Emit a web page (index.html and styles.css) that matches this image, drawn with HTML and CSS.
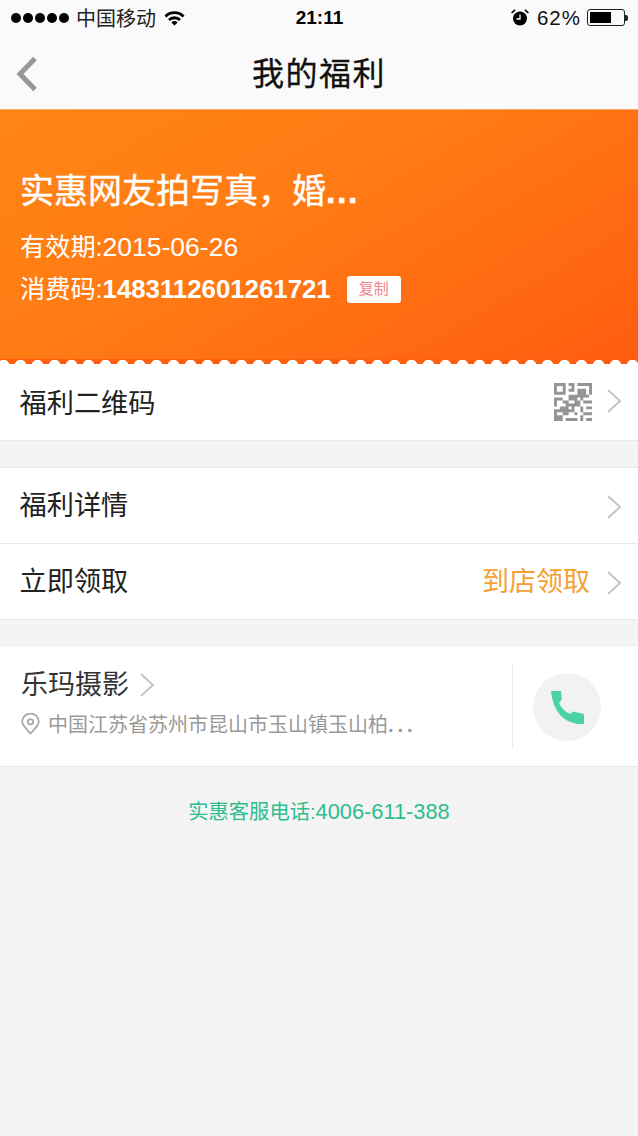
FILE: index.html
```html
<!DOCTYPE html>
<html lang="zh">

<head>
    <meta charset="UTF-8">
    <title>我的福利</title>
    <link rel="stylesheet" href="styles.css">
</head>

<body>
    <div class="status-bar">
        <div class="status-left">
            <span class="signal"><i></i><i></i><i></i><i></i><i></i></span>
            <span class="carrier">中国移动</span>
            <svg class="wifi" width="21" height="16" viewBox="0 0 21 16">
                <path d="M0.5 5.5 A14 14 0 0 1 20.5 5.5 L18.6 7.5 A11.4 11.4 0 0 0 2.4 7.5 Z" />
                <path d="M4 9 A9.2 9.2 0 0 1 17 9 L15.1 11 A6.6 6.6 0 0 0 5.9 11 Z" />
                <path d="M7.4 12.4 A4.4 4.4 0 0 1 13.6 12.4 L10.5 15.6 Z" />
            </svg>
        </div>
        <div class="status-time">21:11</div>
        <div class="status-right">
            <svg class="alarm" width="18" height="17" viewBox="0 0 18 17">
                <circle cx="9" cy="9.5" r="7" />
                <path d="M0.6 4 L4 0.8 M14 0.8 L17.4 4" stroke="#000" stroke-width="1.6" />
                <path d="M9 5.5 V10 H5.5" stroke="#fff" stroke-width="1.3" fill="none" />
            </svg>
            <span class="battery-text">62%</span>
            <span class="battery"><span class="battery-fill"></span></span>
            <span class="battery-cap"></span>
        </div>
    </div>

    <div class="nav">
        <svg class="back" width="22" height="36" viewBox="0 0 22 36">
            <path d="M19 2.5 L4 18 L19 33.5" />
        </svg>
        <h1>我的福利</h1>
    </div>

    <div class="ticket">
        <div class="ticket-title">实惠网友拍写真，婚<span class="ticket-dots">...</span></div>
        <div class="ticket-line"><span class="ticket-label">有效期:</span><span class="ticket-date">2015-06-26</span></div>
        <div class="ticket-line">
            <span class="ticket-label">消费码:</span><b>1483112601261721</b>
            <span class="copy-btn">复制</span>
        </div>
    </div>
    <div class="scallop"></div>

    <div class="group group-first">
        <div class="row row-single">
            <span class="row-label">福利二维码</span>
            <svg class="qr" width="38" height="38" viewBox="0 0 13 13">
                <path d="M0 0h4v4h-4z M1 1v2h2v-2z" fill-rule="evenodd" />
                <path d="M5 0h2v1h-2z M8 0h5v1h-5z M6 1h1v2h-1z M12 1h1v3h-1z M5 2h1v1h-1z M8 2h3v3h-3z M5 4h3v2h-3z M11 4h1v1h-1z M0 5h3v1h-3z M9 5h1v1h-1z M11 6h2v1h-2z M0 6h1v2h-1z M3 6h2v1h-2z M7 6h2v2h-2z M10 6h1v1h-1z M4 7h3v1h-3z M2 8h3v2h-3z M6 8h1v1h-1z M9 8h1v2h-1z M11 8h2v1h-2z M0 9h2v1h-2z M5 9h2v1h-2z M0 10h1v3h-1z M3 10h2v1h-2z M7 10h1v1h-1z M10 10h3v1h-3z M1 11h2v1h-2z M1 12h2v1h-2z M4 12h4v1h-4z M9 11h1v2h-1z M11 12h2v1h-2z" />
            </svg>
            <svg class="chevron" width="16" height="26" viewBox="0 0 16 26">
                <path d="M2 2 L14 13 L2 24" />
            </svg>
        </div>
    </div>

    <div class="group">
        <div class="row">
            <span class="row-label">福利详情</span>
            <svg class="chevron chevron-low" width="16" height="26" viewBox="0 0 16 26">
                <path d="M2 2 L14 13 L2 24" />
            </svg>
        </div>
        <div class="row row-divided">
            <span class="row-label">立即领取</span>
            <span class="row-value">到店领取</span>
            <svg class="chevron chevron-low" width="16" height="26" viewBox="0 0 16 26">
                <path d="M2 2 L14 13 L2 24" />
            </svg>
        </div>
    </div>

    <div class="group store">
        <div class="store-info">
            <div class="store-name">
                <span>乐玛摄影</span>
                <svg class="chevron" width="16" height="26" viewBox="0 0 16 26">
                    <path d="M2 2 L14 13 L2 24" />
                </svg>
            </div>
            <div class="store-address">
                <svg class="pin" width="19" height="22" viewBox="0 0 19 22">
                    <path d="M9.5 20.5 C5 15.5 1.2 12.5 1.2 8.8 A8.3 8.3 0 0 1 17.8 8.8 C17.8 12.5 14 15.5 9.5 20.5 Z" />
                    <circle cx="9.5" cy="8.8" r="2.6" />
                </svg>
                <span>中国江苏省苏州市昆山市玉山镇玉山柏<span class="address-dots">...</span></span>
            </div>
        </div>
        <div class="store-call">
            <span class="call-circle">
                <svg width="33" height="33" viewBox="0 0 33 33">
                    <path d="M0 1 Q0 0 1 0 H10 L10.8 8.5 L8 12 Q12 20 19 23 L22 20.5 L32 22.8 Q33 23 33 24 V33 H27 Q4 30 0 1 Z" />
                </svg>
            </span>
        </div>
    </div>

    <div class="service">实惠客服电话:<span class="service-number">4006-611-388</span></div>
</body>

</html>
```

FILE: styles.css
```css
* {
    box-sizing: border-box;
}

html,
body {
    margin: 0;
    padding: 0;
}

body {
    width: 638px;
    height: 1136px;
    overflow: hidden;
    background-color: #f4f4f4;
    font-family: "Liberation Sans", "Noto Sans CJK SC", sans-serif;
    color: #222;
}

.status-bar {
    display: grid;
    grid-template-columns: 1fr auto 1fr;
    align-items: center;
    height: 35px;
    padding: 0 10px 0 11px;
    background-color: #fafafa;
    color: #111;
}

.status-left,
.status-right {
    display: flex;
    align-items: center;
}

.status-right {
    justify-content: flex-end;
}

.signal {
    display: flex;
    gap: 2px;
    margin-right: 7px;
}

.signal i {
    width: 10px;
    height: 10px;
    border-radius: 50%;
    background-color: #000;
}

.carrier {
    font-size: 20px;
    color: #222;
}

.wifi {
    margin-left: 8px;
}

.status-time {
    font-size: 19px;
    font-weight: bold;
    color: #000;
}

.alarm {
    margin-right: 8px;
}

.battery-text {
    font-size: 20.5px;
    letter-spacing: 1px;
    margin-right: 6px;
}

.battery {
    display: block;
    width: 38px;
    height: 17px;
    padding: 2px;
    border: 1px solid #222;
    border-radius: 3px;
}

.battery-fill {
    display: block;
    width: 21px;
    height: 11px;
    background-color: #000;
}

.battery-cap {
    width: 3px;
    height: 6px;
    background-color: #222;
    border-radius: 0 2px 2px 0;
}

.nav {
    display: flex;
    align-items: center;
    justify-content: center;
    position: relative;
    height: 74px;
    background-color: #fafafa;
    padding-bottom: 2px;
}

.nav h1 {
    margin: 0;
    font-size: 32px;
    font-weight: normal;
    letter-spacing: 1.5px;
    color: #111;
    -webkit-text-stroke: 0.3px #111;
}

.back {
    position: absolute;
    left: 16px;
    top: 21px;
}

.back path {
    fill: none;
    stroke: #9a9597;
    stroke-width: 5;
}

.ticket {
    height: 250px;
    padding-top: 57px;
    padding-left: 20px;
    border-top: 1px solid #f8a866;
    background: linear-gradient(150deg, #ff8614 0%, #ff7a14 45%, #ff5c10 100%);
    color: #fff;
}

.ticket-title {
    font-size: 34px;
    line-height: 48px;
    font-weight: normal;
    -webkit-text-stroke: 0.4px #fff;
    margin-bottom: 11px;
}

.ticket-dots {
    font-weight: bold;
    letter-spacing: 1.5px;
}

.ticket-line {
    display: flex;
    align-items: center;
    line-height: 42px;
}

.ticket-label {
    font-size: 25.2px;
}

.ticket-date {
    font-size: 26.5px;
}

.ticket-line b {
    font-size: 25.8px;
    margin-right: 16px;
}

.copy-btn {
    display: inline-flex;
    align-items: center;
    justify-content: center;
    width: 54px;
    height: 27px;
    background-color: #fff;
    border-radius: 3px;
    font-size: 15px;
    color: #f2838a;
}

.scallop {
    height: 6px;
    background-color: #ff5f10;
    background-image: radial-gradient(circle at 8.5px 6.5px, #fff 5.5px, transparent 6px);
    background-size: 17px 6px;
    background-position: -5px 0;
}

.group {
    background-color: #fff;
    border-top: 1px solid #e9e9e9;
    border-bottom: 1px solid #e9e9e9;
    margin-top: 26px;
}

.group-first {
    margin-top: -1px;
    border-top: none;
}

.row {
    display: flex;
    align-items: center;
    height: 75px;
    padding: 0 16px 5px 19.5px;
}

.row-single {
    height: 76px;
    padding-bottom: 2px;
}

.row-divided {
    height: 76px;
    border-top: 1px solid #e9e9e9;
}

.row-label {
    flex: 1;
    font-size: 27.2px;
}

.row-value {
    font-size: 27px;
    color: #f5a033;
    margin-right: 16px;
}

.qr {
    fill: #949494;
    margin: 2px 14px 0 0;
}

.chevron path {
    fill: none;
    stroke: #c4c4c4;
    stroke-width: 2;
}

.chevron-low {
    margin-top: 8px;
}

.store {
    display: flex;
    height: 122px;
    margin-top: 25px;
    padding: 17px 0;
}

.store-info {
    flex: 1;
    min-width: 0;
    padding: 2px 0 0 21px;
    border-right: 1px solid #ececec;
}

.store-name {
    display: flex;
    align-items: center;
    gap: 10px;
    font-size: 27px;
    line-height: 40px;
    color: #333;
}

.store-address {
    display: flex;
    align-items: center;
    gap: 8px;
    margin-top: 4px;
    font-size: 20px;
    color: #999;
}

.address-dots {
    font-weight: bold;
    letter-spacing: 4px;
}

.pin {
    flex-shrink: 0;
}

.pin path,
.pin circle {
    fill: none;
    stroke: #a8a8a8;
    stroke-width: 1.8;
}

.store-call {
    display: flex;
    align-items: center;
    justify-content: center;
    width: 125px;
    padding: 2px 17px 0 0;
}

.call-circle {
    display: flex;
    align-items: center;
    justify-content: center;
    width: 68px;
    height: 68px;
    border-radius: 50%;
    background-color: #f2f2f2;
}

.call-circle svg {
    fill: #4dd2a8;
}

.service {
    margin-top: 28px;
    text-align: center;
    font-size: 20.3px;
    color: #2dbd8f;
}

.service-number {
    font-size: 21.8px;
}
```
